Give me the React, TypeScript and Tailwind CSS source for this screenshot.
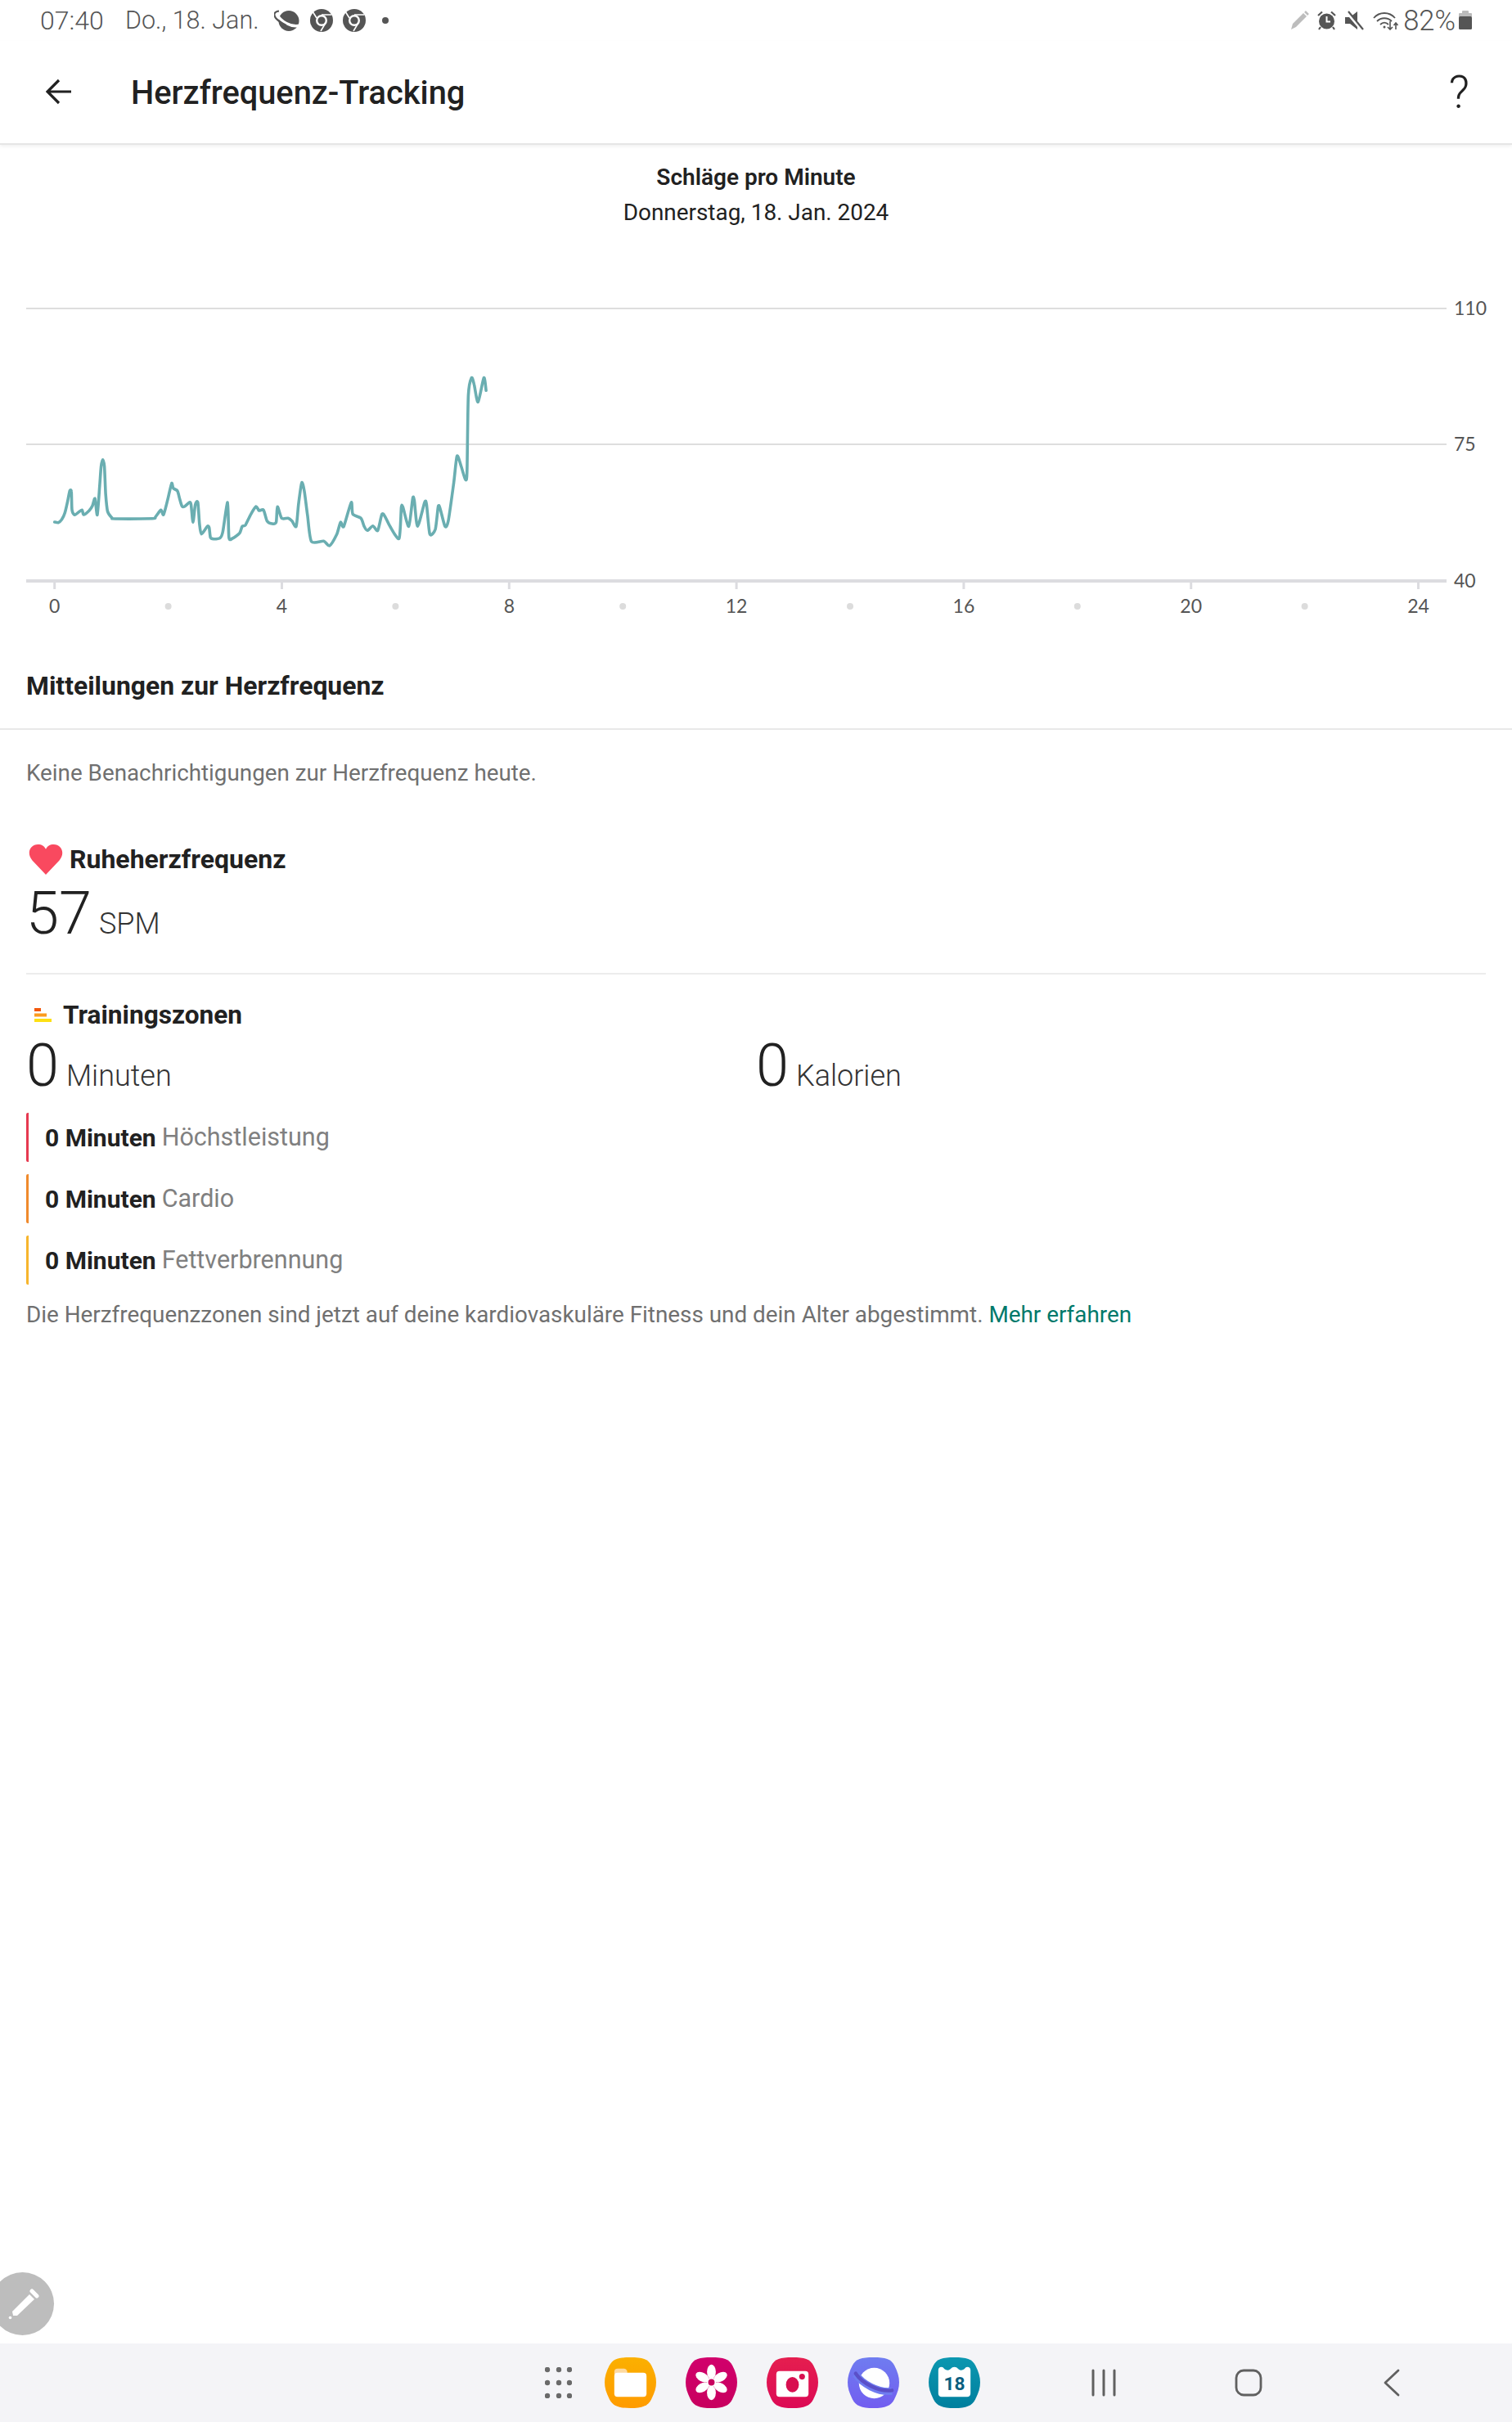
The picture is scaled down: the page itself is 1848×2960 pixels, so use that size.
const pts: [number, number][] = [[118,624],[130,626],[140,615],[150,590],[158,550],[165,510],[170,512],[172,580],[180,598],[190,590],[203,580],[208,597],[225,582],[235,565],[243,538],[250,598],[257,500],[262,420],[267,395],[272,420],[276,520],[282,585],[295,608],[305,612],[420,611],[430,605],[447,580],[455,597],[468,540],[480,482],[485,500],[498,510],[505,540],[512,566],[520,567],[535,552],[540,560],[546,625],[553,560],[561,552],[566,630],[572,668],[590,640],[596,645],[600,680],[610,686],[630,682],[638,660],[653,552],[657,680],[668,684],[690,665],[698,640],[708,635],[725,595],[741,567],[750,582],[764,580],[775,620],[790,630],[803,625],[807,568],[820,610],[840,610],[852,620],[865,640],[872,560],[882,480],[890,510],[900,600],[912,695],[950,694],[968,711],[990,670],[1002,625],[1012,640],[1035,552],[1040,595],[1065,610],[1075,640],[1085,655],[1102,638],[1117,655],[1130,595],[1140,605],[1155,640],[1183,684],[1190,570],[1195,570],[1213,640],[1225,538],[1230,545],[1240,640],[1262,552],[1268,560],[1278,668],[1295,650],[1304,567],[1310,575],[1325,640],[1335,620],[1352,480],[1362,382],[1375,420],[1388,468],[1393,440],[1397,160],[1407,95],[1415,120],[1427,184],[1445,95],[1452,142]];

function linePath() {
  const p = pts.map(([x, y]) => [20 + x / 2.529, 130 + y / 3]);
  let d = `M${p[0][0].toFixed(1)} ${p[0][1].toFixed(1)}`;
  for (let i = 0; i < p.length - 1; i++) {
    const a = p[Math.max(0, i - 1)], b = p[i], c = p[i + 1], e = p[Math.min(p.length - 1, i + 2)];
    const k = 0.12;
    d += ` C${(b[0] + (c[0] - a[0]) * k).toFixed(1)} ${(b[1] + (c[1] - a[1]) * k).toFixed(1)} ${(c[0] - (e[0] - b[0]) * k).toFixed(1)} ${(c[1] - (e[1] - b[1]) * k).toFixed(1)} ${c[0].toFixed(1)} ${c[1].toFixed(1)}`;
  }
  return d;
}

const SQUIRCLE = "M32 1C47 1 54 3 58 11C62 19 64 25 64 32C64 39 62 45 58 53C54 61 47 64 32 64C17 64 10 61 6 53C2 45 0 39 0 32C0 25 2 19 6 11C10 3 17 1 32 1Z";

function Chart() {
  const hours = [0, 2, 4, 6, 8, 10, 12, 14, 16, 18, 20, 22, 24];
  return (
    <svg width="1848" height="480" viewBox="0 0 1848 480" className="block" style={{ fontFamily: "Lato, sans-serif" }}>
      <line x1="32" x2="1768" y1="77" y2="77" stroke="#dedede" strokeWidth="2" />
      <line x1="32" x2="1768" y1="243" y2="243" stroke="#dedede" strokeWidth="2" />
      <line x1="32" x2="1768" y1="410" y2="410" stroke="#dcdce0" strokeWidth="4" />
      <text x="1777" y="85" fontSize="23" fill="#555">110</text>
      <text x="1777" y="251" fontSize="23" fill="#555">75</text>
      <text x="1777" y="418" fontSize="23" fill="#555">40</text>
      {hours.map((h) => {
        const x = 66.7 + h * 69.45;
        return h % 4 === 0 ? (
          <g key={h}>
            <line x1={x} x2={x} y1="411" y2="420" stroke="#dcdce0" strokeWidth="3" />
            <text x={x} y="449" fontSize="23" fill="#555" textAnchor="middle">{h}</text>
          </g>
        ) : (
          <circle key={h} cx={x} cy="441" r="4" fill="#dcdcdc" />
        );
      })}
      <path d={linePath()} fill="none" stroke="#6aaeb1" strokeWidth="3.6" strokeLinejoin="round" strokeLinecap="round" />
    </svg>
  );
}

function Planet() {
  return (
    <svg width="34" height="27" viewBox="0 0 34 27">
      <circle cx="18" cy="13.500" r="12.500" fill="#555" />
      <path d="M3 5C8 14 20 22 32 19" fill="none" stroke="#fff" strokeWidth="3.500" strokeLinecap="round" />
      <path d="M6 1.500C0 2 -1 6 2 10C6 15 11 17 15 19" fill="none" stroke="#555" strokeWidth="2.200" />
    </svg>
  );
}

function Chrome() {
  return (
    <svg width="28" height="28" viewBox="0 0 28 28">
      <circle cx="14" cy="14" r="14" fill="#555" />
      <circle cx="14" cy="14" r="7" fill="#fff" />
      <circle cx="14" cy="14" r="4.600" fill="#555" />
      <path d="M14 7H26M8 11L3 3M19 17L13 27" stroke="#fff" strokeWidth="1.600" />
    </svg>
  );
}

function StatusBar() {
  return (
    <div className="h-[50px] flex items-center justify-between pl-[49px] pr-[49px] text-[#555]" style={{ fontFamily: "Roboto, sans-serif" }}>
      <div className="flex items-center">
        <span className="text-[32px] font-light w-[104px]">07:40</span>
        <span className="text-[30.500px] font-light w-[182px]">Do., 18. Jan.</span>
        <Planet />
        <span className="ml-[10px]"><Chrome /></span>
        <span className="ml-[12px]"><Chrome /></span>
        <span className="ml-[20px] w-[8px] h-[8px] rounded-full bg-[#555]" />
      </div>
      <div className="flex items-center">
        <svg width="24" height="24" viewBox="0 0 24 24">
          <path d="M2 23L4 16L17 3L21 7L8 20Z" fill="#bdbdbd" />
          <path d="M19 1L23 5" stroke="#bdbdbd" strokeWidth="2.500" />
        </svg>
        <svg className="ml-[10px]" width="23" height="24" viewBox="0 0 23 24">
          <circle cx="11.500" cy="13" r="9.500" fill="#555" />
          <path d="M11.500 7V13.500H16" fill="none" stroke="#fff" strokeWidth="2" />
          <path d="M1 6L6 1.500M22 6L17 1.500M4 20L2 23M19 20L21 23" stroke="#555" strokeWidth="2.200" />
        </svg>
        <svg className="ml-[11px]" width="23" height="24" viewBox="0 0 23 24">
          <path d="M0 8H6L15 1V23L6 16H0Z" fill="#555" />
          <path d="M1 0L21 24" stroke="#fff" strokeWidth="4" />
          <path d="M4 1L22 23" stroke="#555" strokeWidth="2.200" />
        </svg>
        <svg className="ml-[11px]" width="31" height="24" viewBox="0 0 31 24">
          <path d="M1 9C8 1 20 1 27 9M5 13C10 8 18 8 23 13M9 17C12 14 16 14 19 17" fill="none" stroke="#555" strokeWidth="1.800" />
          <circle cx="14" cy="20" r="1.500" fill="#555" />
          <path d="M21 13V23M18 20L21 23L24 20M28 23V15M25.500 18L28 15L30.500 18" fill="none" stroke="#555" strokeWidth="1.600" />
        </svg>
        <span className="ml-[6px] text-[34.500px] font-light leading-none">82%</span>
        <svg className="ml-[4px]" width="16" height="24" viewBox="0 0 16 24">
          <rect x="4" y="0" width="8" height="4" rx="1" fill="#bbb" />
          <rect x="0" y="3" width="16" height="5" rx="1" fill="#bbb" />
          <rect x="0" y="7" width="16" height="16" rx="1.500" fill="#555" />
        </svg>
      </div>
    </div>
  );
}

function Zone({ color, label }: { color: string; label: string }) {
  return (
    <div className="h-[60px] flex items-center pl-[20px] border-l-[3px] rounded-[2px] text-[30px]" style={{ borderColor: color }}>
      <span className="font-bold text-[#212121]">0 Minuten</span>
      <span className="ml-[7px] text-[30.500px] text-[#808080]">{label}</span>
    </div>
  );
}

function AppIcon({ grad, children, id }: { grad: [string, string]; children: React.ReactNode; id: string }) {
  return (
    <svg width="63" height="63" viewBox="0 0 64 64">
      <defs>
        <linearGradient id={id} x1="0" x2="0" y1="0" y2="1">
          <stop offset="0" stopColor={grad[0]} />
          <stop offset="1" stopColor={grad[1]} />
        </linearGradient>
      </defs>
      <path d={SQUIRCLE} fill={`url(#${id})`} />
      {children}
    </svg>
  );
}

function Dock() {
  const petals = [0, 60, 120, 180, 240, 300];
  return (
    <div className="h-[96px] bg-[#f4f4f7] flex items-center shrink-0">
      <svg className="ml-[666px]" width="33" height="38" viewBox="0 0 33 38">
        {[3, 19, 35].map((y) => [3, 17, 30].map((x) => <circle key={`${x}-${y}`} cx={x} cy={y} r="3.200" fill="#6a6a6a" />))}
      </svg>
      <div className="ml-[40px] flex gap-[36px] -mt-[1px]">
        <AppIcon id="g1" grad={["#fbb000", "#ff9b00"]}>
          <path d="M12 19C12 16 14 15 16 15H24C26 15 27 16 28 18V22H12Z" fill="#fdd9a0" />
          <rect x="12" y="20" width="40" height="30" rx="4" fill="#fff" />
        </AppIcon>
        <AppIcon id="g2" grad={["#d1006c", "#c8005f"]}>
          {petals.map((a) => (
            <ellipse key={a} cx="32" cy="19" rx="5.500" ry="9" fill="#fff" transform={`rotate(${a} 32 32)`} />
          ))}
          <circle cx="32" cy="32" r="6" fill="#fff" />
          <circle cx="32" cy="32" r="4" fill="#c8005f" />
        </AppIcon>
        <AppIcon id="g3" grad={["#e51e4f", "#dc0a55"]}>
          <rect x="12" y="18" width="40" height="32" rx="4" fill="#fff" />
          <ellipse cx="32" cy="35" rx="8" ry="9.500" fill="#d80f50" />
          <circle cx="44" cy="25" r="3.600" fill="#d80f50" />
        </AppIcon>
        <AppIcon id="g4" grad={["#6f7cf0", "#725df0"]}>
          <circle cx="33" cy="33" r="19" fill="#fff" />
          <path d="M10 22C18 34 38 45 55 43" fill="none" stroke="#6f7cf0" strokeWidth="9" />
          <path d="M10 21C18 33 38 44 55 42" fill="none" stroke="#5b50c8" strokeWidth="4.500" strokeLinecap="round" />
        </AppIcon>
        <AppIcon id="g5" grad={["#0b97b0", "#007f9e"]}>
          <path d="M16 13C19 13 19 17 24 17C27 17 28 13 32 13C36 13 37 17 40 17C45 17 45 13 48 13C51 13 52 15 52 17V46C52 49 50 50 48 50H16C14 50 12 49 12 46V17C12 15 13 13 16 13Z" fill="#fff" />
          <text x="32" y="42" textAnchor="middle" fontSize="23" fontWeight="700" fill="#0a5f80" style={{ fontFamily: "Roboto, sans-serif" }}>18</text>
        </AppIcon>
      </div>
      <svg className="ml-[136px]" width="30" height="34" viewBox="0 0 30 34">
        <path d="M2 2V32M15 2V32M28 2V32" stroke="#606060" strokeWidth="3" strokeLinecap="round" />
      </svg>
      <svg className="ml-[145px]" width="34" height="34" viewBox="0 0 34 34">
        <rect x="2" y="2" width="30" height="30" rx="9" fill="none" stroke="#606060" strokeWidth="2.800" />
      </svg>
      <svg className="ml-[148px]" width="20" height="34" viewBox="0 0 20 34">
        <path d="M18 2L2 17L18 32" fill="none" stroke="#606060" strokeWidth="2.800" strokeLinecap="round" strokeLinejoin="round" />
      </svg>
    </div>
  );
}

export default function App() {
  return (
    <div className="relative w-[1848px] h-[2960px] overflow-hidden bg-white flex flex-col" style={{ fontFamily: "Roboto, sans-serif" }}>
      <StatusBar />
      <header className="h-[127px] flex items-center justify-between pl-[56px] pr-[52px] border-b-[2px] border-[#e6e6e6] shadow-[0_2px_4px_rgba(0,0,0,0.06)] shrink-0">
        <div className="flex items-center">
          <svg width="33" height="32" viewBox="0 0 33 32">
            <path d="M31 16H3M16 2L2 16L16 30" fill="none" stroke="#212121" strokeWidth="3.200" />
          </svg>
          <h1 className="ml-[71px] mt-[3px] text-[39.800px] font-medium text-[#212121] leading-none">Herzfrequenz-Tracking</h1>
        </div>
        <span className="text-[56px] font-light text-[#212121] leading-none">?</span>
      </header>

      <main className="flex-1">
        <div className="mt-[20px] h-[40px] flex items-center justify-center text-[28px] font-semibold text-[#212121]">Schläge pro Minute</div>
        <div className="mt-[3px] h-[40px] flex items-center justify-center text-[27.900px] text-[#212121]">Donnerstag, 18. Jan. 2024</div>
        <div className="mt-[20px]">
          <Chart />
        </div>
        <h2 className="mt-[39px] px-[32px] h-[40px] flex items-center text-[31.900px] font-bold text-[#212121]">Mitteilungen zur Herzfrequenz</h2>
        <div className="mt-[31px] h-[2px] bg-[#e8e8e8]" />
        <p className="mt-[33px] px-[32px] h-[40px] flex items-center text-[27.800px] text-[#707070]">Keine Benachrichtigungen zur Herzfrequenz heute.</p>

        <section className="px-[32px]">
          <div className="mt-[63px] h-[44px] flex items-center">
            <svg className="ml-[2px]" width="44" height="39" viewBox="0 0 44 40">
              <path d="M22 39L5 21C-3 11 3 1 12 1C17 1 20 3 22 7C24 3 27 1 32 1C41 1 47 11 39 21Z" fill="#f9495f" />
            </svg>
            <span className="ml-[7px] text-[32px] font-bold text-[#212121]">Ruheherzfrequenz</span>
          </div>
          <div className="mt-[5px] h-[80px] flex items-baseline text-[#212121] font-light">
            <span className="text-[72px] leading-[80px]">57</span>
            <span className="ml-[9px] text-[36px] text-[#333]">SPM</span>
          </div>
          <div className="mt-[32px] h-[2px] bg-[#ececec]" />
          <div className="mt-[30px] h-[40px] flex items-center">
            <svg className="ml-[10px]" width="22" height="18" viewBox="0 0 22 18">
              <rect x="0" y="0" width="8" height="4" fill="#f2580c" />
              <rect x="0" y="6.500" width="15" height="4" fill="#fb9b1f" />
              <rect x="0" y="13" width="21" height="4" fill="#fde014" />
            </svg>
            <span className="ml-[13px] text-[31.600px] font-bold text-[#212121]">Trainingszonen</span>
          </div>
          <div className="mt-[2px] h-[80px] flex items-baseline text-[#212121] font-light">
            <div className="w-[892px] flex items-baseline">
              <span className="text-[72px] leading-[80px]">0</span>
              <span className="ml-[9px] text-[36px] text-[#333]">Minuten</span>
            </div>
            <span className="text-[72px] leading-[80px]">0</span>
            <span className="ml-[9px] text-[36px] text-[#333]">Kalorien</span>
          </div>
          <div className="mt-[17px] flex flex-col gap-[15px]">
            <Zone color="#e63950" label="Höchstleistung" />
            <Zone color="#f08a2c" label="Cardio" />
            <Zone color="#f7b52d" label="Fettverbrennung" />
          </div>
          <p className="mt-[17px] h-[40px] flex items-center text-[27.850px] text-[#707070] whitespace-pre">
            Die Herzfrequenzzonen sind jetzt auf deine kardiovaskuläre Fitness und dein Alter abgestimmt. <span className="text-[#00796b]">Mehr erfahren</span>
          </p>
        </section>
      </main>

      <Dock />

      <div className="absolute left-[-11px] top-[2777px] w-[77px] h-[77px] rounded-full bg-[#bdbdbd] flex items-center justify-center">
        <svg className="ml-[2px]" width="38" height="38" viewBox="0 0 38 38">
          <path d="M5 28L26 7L32 13L11 33L6 33Z" fill="#fff" />
          <path d="M29 3L35 9" stroke="#fff" strokeWidth="5" strokeLinecap="round" />
          <circle cx="2.500" cy="35.500" r="1.800" fill="#fff" />
        </svg>
      </div>
    </div>
  );
}
